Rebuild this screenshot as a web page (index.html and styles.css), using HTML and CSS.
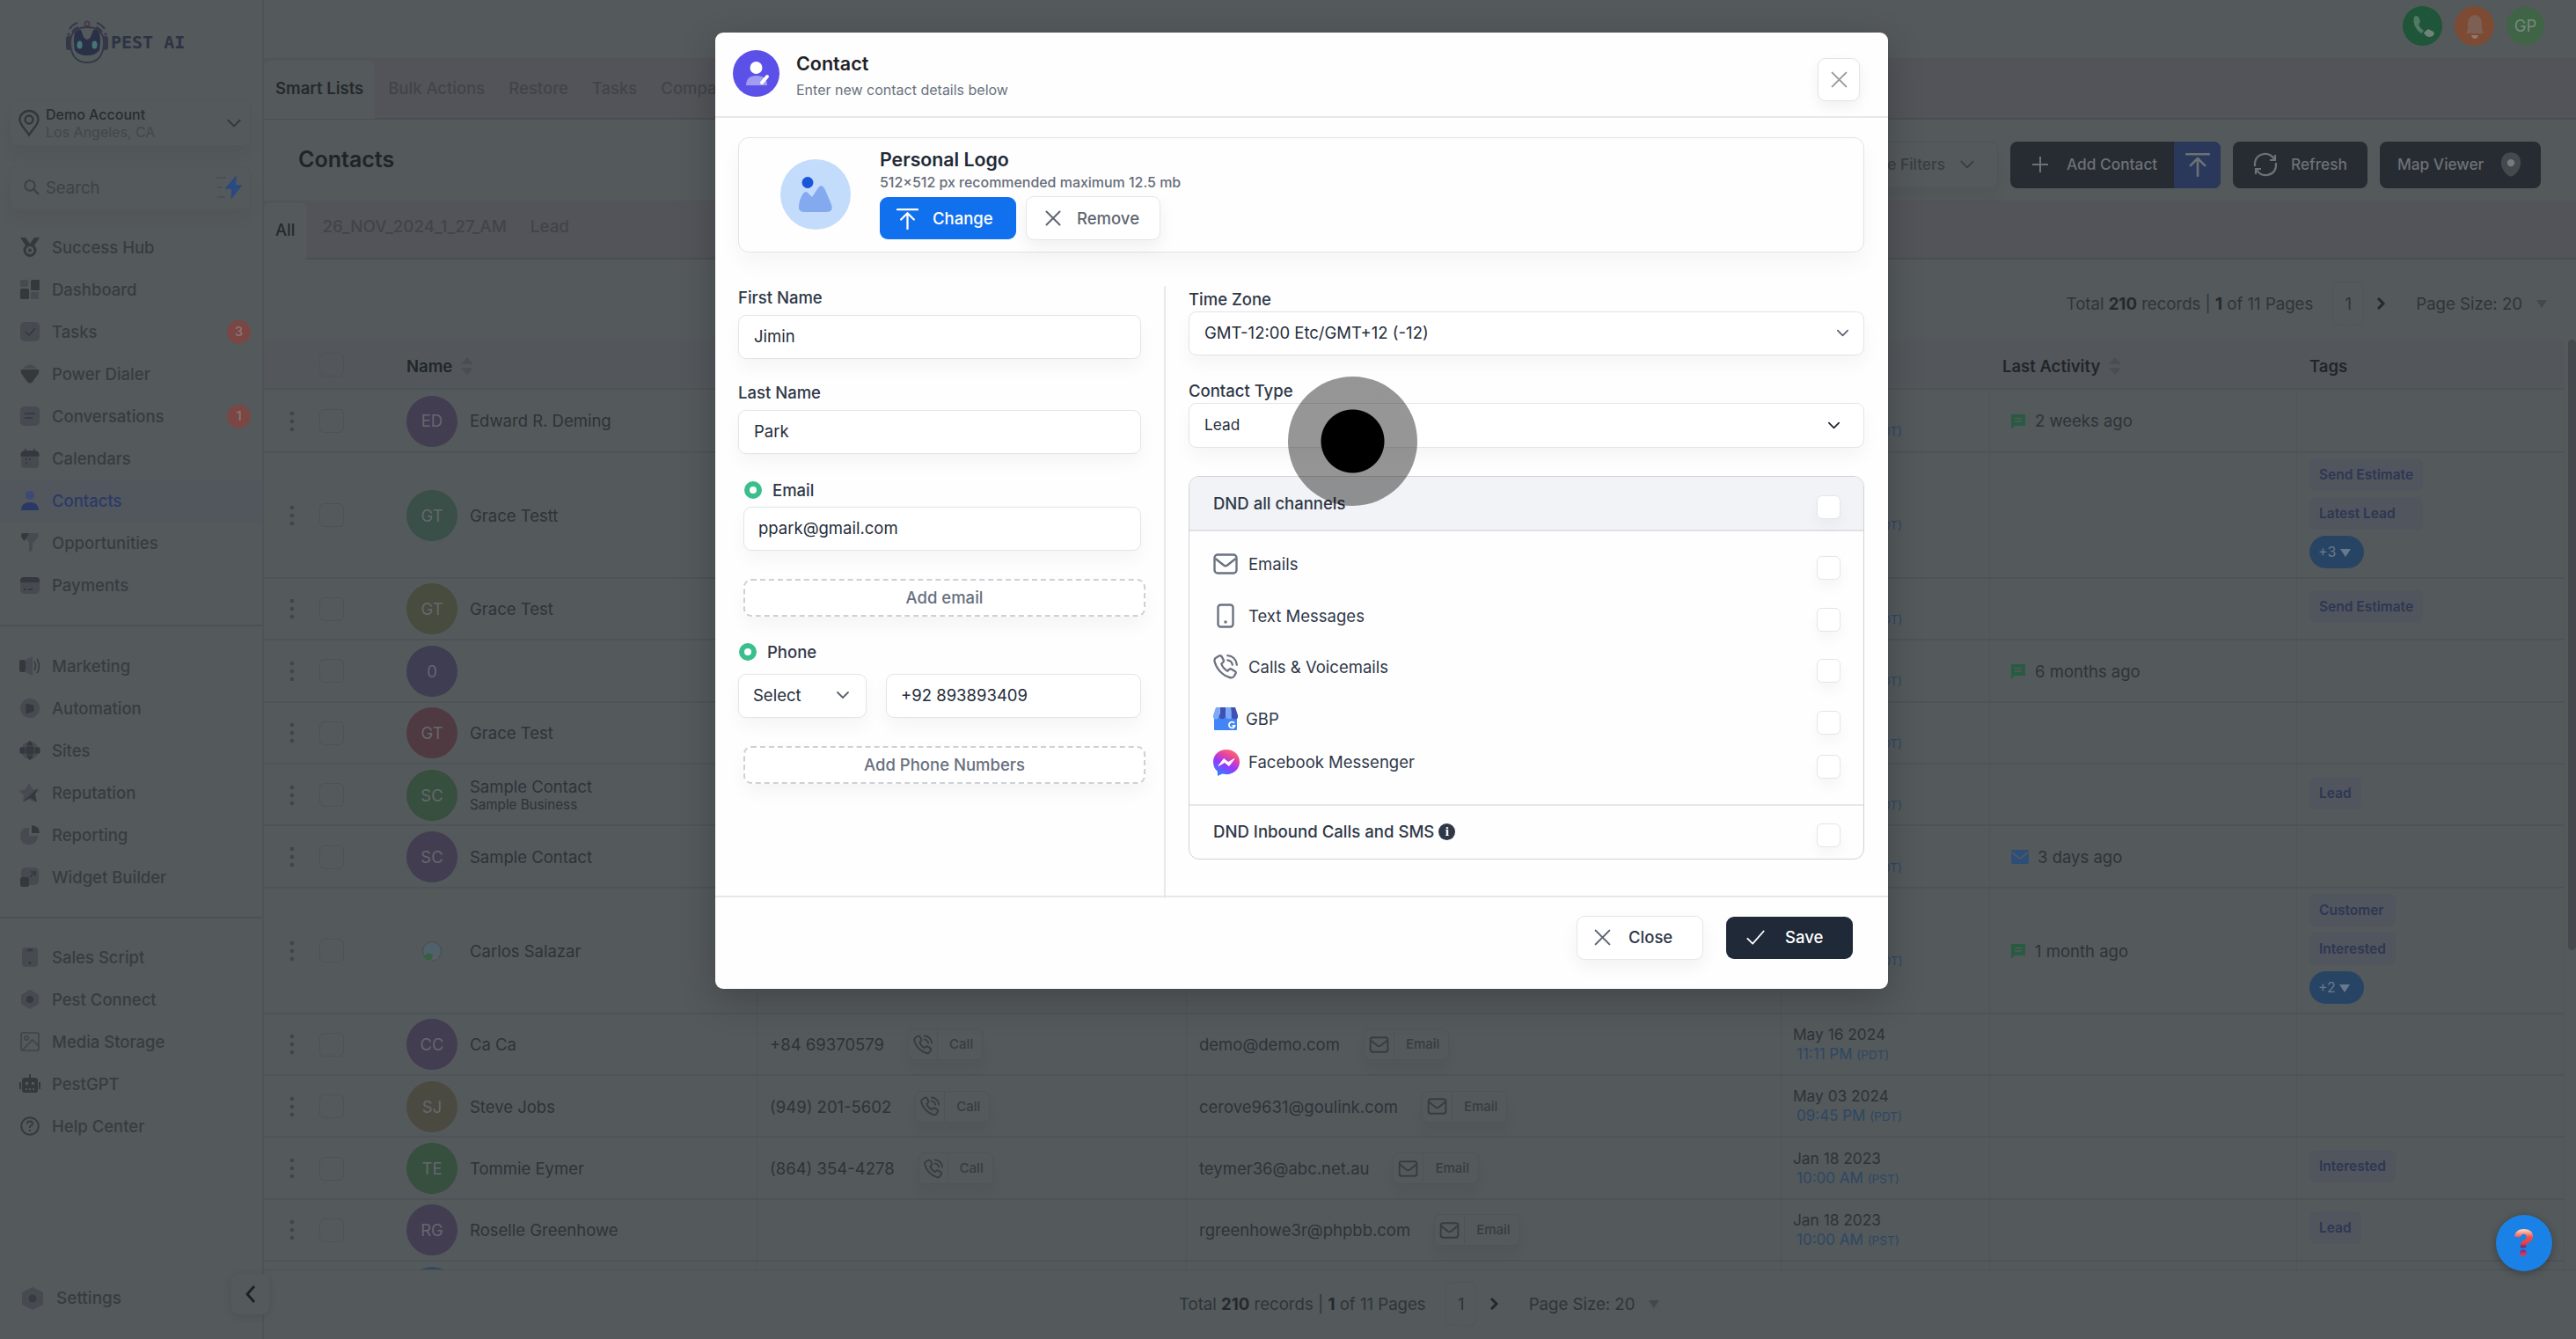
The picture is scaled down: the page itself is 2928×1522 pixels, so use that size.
FILE: index.html
```html
<!DOCTYPE html>
<html lang="en">
<head>
<meta charset="utf-8">
<title>Contacts</title>
<link rel="stylesheet" href="styles.css">
</head>
<body>

<!-- Icon set -->
<svg class="icon-defs" width="0" height="0">
  <defs>
    <linearGradient id="fb-grad" x1="0.2" y1="1" x2="0.7" y2="0">
      <stop offset="0" stop-color="#1f8bff"/>
      <stop offset="0.45" stop-color="#9a36ff"/>
      <stop offset="0.75" stop-color="#e8449f"/>
      <stop offset="1" stop-color="#ff6a6a"/>
    </linearGradient>
  </defs>
  <symbol id="i-down" viewBox="0 0 24 24"><path d="M4 8l8 8 8-8" fill="none" stroke="currentColor" stroke-width="2.4" stroke-linecap="round" stroke-linejoin="round"/></symbol>
  <symbol id="i-right" viewBox="0 0 24 24"><path d="M8 4l8 8-8 8" fill="none" stroke="currentColor" stroke-width="4"/></symbol>
  <symbol id="i-x" viewBox="0 0 24 24"><path d="M3 3l18 18M21 3L3 21" fill="none" stroke="currentColor" stroke-width="2.4" stroke-linecap="round"/></symbol>
  <symbol id="i-check" viewBox="0 0 24 24"><path d="M1 13l7 7L23 3" fill="none" stroke="currentColor" stroke-width="2.2" stroke-linecap="round" stroke-linejoin="round"/></symbol>
  <symbol id="i-upload" viewBox="0 0 24 24"><path d="M1 2h22M12 23V7M5 13l7-7 7 7" fill="none" stroke="currentColor" stroke-width="2.2" stroke-linecap="round" stroke-linejoin="round"/></symbol>
  <symbol id="i-mail" viewBox="0 0 28 24"><rect x="1.5" y="1.5" width="25" height="21" rx="3.5" fill="none" stroke="currentColor" stroke-width="2.4"/><path d="M2.5 6l9.5 7.500q2 1.500 4 0L25.500 6" fill="none" stroke="currentColor" stroke-width="2.4"/></symbol>
  <symbol id="i-mobile" viewBox="0 0 20 28"><rect x="1.500" y="1.500" width="17" height="25" rx="3" fill="none" stroke="currentColor" stroke-width="2.4"/><circle cx="10" cy="21" r="1.700" fill="currentColor"/></symbol>
  <symbol id="i-call" viewBox="0 0 24 24"><path d="M3.200 2.800l2.600-1.500c.9-.5 2-.2 2.500.7l1.700 3.200c.4.8.2 1.700-.4 2.300L8 9c.8 2.700 3.200 5.500 6 7l1.600-1.500c.7-.6 1.600-.7 2.400-.2l3.200 1.900c.8.500 1.100 1.600.6 2.400l-1.400 2.400c-.8 1.300-2.300 1.900-3.800 1.500C9 20.500 3 14 1.300 6.500c-.3-1.500.5-3 1.900-3.700zM14 5.500c2.500.3 4.300 2 4.700 4.500M14 1c5 .4 8.500 4 9 9" fill="none" stroke="currentColor" stroke-width="2" stroke-linecap="round"/></symbol>
  <symbol id="i-chat" viewBox="0 0 16 18"><path d="M0 1h16v13H4l-4 4z" fill="currentColor"/><path d="M4 5.500h8M4 9h8" stroke="#54595c" stroke-width="1.300"/></symbol>
  <symbol id="i-letter" viewBox="0 0 20 16"><rect width="20" height="16" rx="2" fill="currentColor"/><path d="M1 3l9 7 9-7" fill="none" stroke="#54595c" stroke-width="1.600"/></symbol>
  <symbol id="i-sort" viewBox="0 0 14 20"><path d="M0 8l7-8 7 8zM0 12l7 8 7-8z" fill="currentColor"/></symbol>
  <symbol id="i-tri" viewBox="0 0 12 9"><path d="M0 0h12L6 9z" fill="currentColor"/></symbol>
  <symbol id="i-dots" viewBox="0 0 6 24"><circle cx="3" cy="3" r="2.300" fill="currentColor"/><circle cx="3" cy="12" r="2.300" fill="currentColor"/><circle cx="3" cy="21" r="2.300" fill="currentColor"/></symbol>
</svg>

<div class="app">

  <aside class="sidebar">
    <div class="brand">
      <svg width="50" height="50" viewBox="0 0 50 50">
        <path d="M5 10Q8 5 14 3M8 13q3-4 7-5M45 10Q42 5 36 3M42 13q-3-4-7-5" fill="none" stroke="#333848" stroke-width="2"/>
        <circle cx="25" cy="4" r="2.600" fill="none" stroke="#443a48" stroke-width="1.800"/>
        <circle cx="4" cy="16" r="1.800" fill="#443a48"/>
        <circle cx="46" cy="16" r="1.800" fill="#443a48"/>
        <rect x="1" y="18" width="6" height="16" rx="3" fill="#333848"/>
        <rect x="43" y="18" width="6" height="16" rx="3" fill="#333848"/>
        <path d="M6 26Q6 8 25 8t19 18q-1 22-19 22T6 26z" fill="#54595c" stroke="#333848" stroke-width="1.800"/>
        <path d="M11 14q4-4 7-3l3 8q4 6 8 0l3-8q4-1 7 3 2 8 0 20-4 6-14 6t-14-6q-2-12 0-20z" fill="#2a3147"/>
        <ellipse cx="16.500" cy="28" rx="3" ry="4.500" fill="#45757a"/>
        <ellipse cx="33.500" cy="28" rx="3" ry="4.500" fill="#45757a"/>
      </svg>
      <span class="brand-name">PEST AI</span>
    </div>

    <div class="account">
      <svg width="24" height="30" viewBox="0 0 24 30"><path d="M12 28.500C8 22 1.500 17 1.500 11a10.500 10 0 0 1 21 0c0 6-6.500 11-10.500 17.500z" fill="none" stroke="currentColor" stroke-width="2.300"/><circle cx="12" cy="11" r="4.500" fill="none" stroke="currentColor" stroke-width="2.300"/></svg>
      <div class="account-text"><b>Demo Account</b><span>Los Angeles, CA</span></div>
      <svg class="chev" width="20" height="20"><use href="#i-down"/></svg>
    </div>
    <div class="search">
      <svg width="18" height="18" viewBox="0 0 18 18"><circle cx="7" cy="7" r="5.700" fill="none" stroke="currentColor" stroke-width="2"/><path d="M11 11l6 6" stroke="currentColor" stroke-width="2.400"/></svg>
      <span>Search</span>
      <svg class="bolt" width="30" height="28" viewBox="0 0 30 28"><path d="M1 3h11M2 14h5M2 25h9" stroke="#454c5a" stroke-width="1.600"/><path d="M23 2L12 15h7l-1 11 11-14h-7z" fill="#2a4a80" stroke="#2a4a80" stroke-width="1.500" stroke-linejoin="round"/></svg>
    </div>

    <nav class="menu">
      <a><svg class="mi" viewBox="0 0 22 22"><path d="M0 0h6l5 7 5-7h6l-6 9H6z" fill="currentColor"/><circle cx="11" cy="14.500" r="6" fill="none" stroke="currentColor" stroke-width="3"/><circle cx="11" cy="14.500" r="2" fill="currentColor"/></svg>Success Hub</a>
      <a><svg class="mi" viewBox="0 0 22 22"><rect width="9" height="8" rx="1.500" class="pale"/><rect x="12" width="10" height="12" rx="1.500" fill="currentColor"/><rect y="10" width="10" height="12" rx="1.500" fill="currentColor"/><rect x="12" y="14" width="9" height="8" rx="1.500" class="pale"/></svg>Dashboard</a>
      <a><svg class="mi" viewBox="0 0 22 22"><rect width="22" height="22" rx="5" class="pale"/><path d="M6 11l4 4 7-8" fill="none" stroke="currentColor" stroke-width="1.500"/></svg>Tasks<em class="badge">3</em></a>
      <a><svg class="mi" viewBox="0 0 22 22"><path d="M3 5Q11-4 19 5z" class="pale"/><path d="M1 6h20q1 4-2 7l-5 7q-3 3-6 0l-5-7Q0 10 1 6z" fill="currentColor"/></svg>Power Dialer</a>
      <a><svg class="mi" viewBox="0 0 22 22"><rect width="22" height="22" rx="5" class="pale"/><path d="M5 8h12M5 13h9" stroke="currentColor" stroke-width="1.600"/></svg>Conversations<em class="badge">1</em></a>
      <a><svg class="mi" viewBox="0 0 22 22"><rect x="1" y="8" width="20" height="14" rx="4" class="pale"/><path d="M1 8q0-5 5-5h10q5 0 5 5zM6 0v4M16 0v4" fill="currentColor" stroke="currentColor" stroke-width="1.500"/><path d="M6 12h2m2 0h2M6 17h2" stroke="currentColor" stroke-width="2"/></svg>Calendars</a>
      <a class="active"><svg class="mi" viewBox="0 0 22 22"><circle cx="11" cy="5" r="5" fill="#3d4a71"/><path d="M1 22q0-9 10-9t10 9z" fill="currentColor"/></svg>Contacts</a>
      <a><svg class="mi" viewBox="0 0 22 22"><path d="M10 0h10q2 3-1 6l-5 6v7l-4 3V10L6 5z" class="pale"/><path d="M2 0h8L5 9Q-1 4 2 0z" fill="currentColor"/></svg>Opportunities</a>
      <a><svg class="mi" viewBox="0 0 22 22"><rect y="2" width="22" height="19" rx="5" class="pale"/><path d="M0 8V6q0-4 4-4h14q4 0 4 4v2z" fill="currentColor"/><path d="M4 16h3m2 0h5" stroke="currentColor" stroke-width="1.800"/></svg>Payments</a>
    </nav>
    <nav class="menu menu-2">
      <a><svg class="mi" viewBox="0 0 22 22"><path d="M6 4l8-4v22l-8-4z" class="pale"/><rect x="-1" y="4" width="7" height="14" rx="2" fill="currentColor"/><path d="M16 6q3 5 0 10M19 3q5 8 0 16" fill="none" stroke="currentColor" stroke-width="1.500"/></svg>Marketing</a>
      <a><svg class="mi" viewBox="0 0 22 22"><circle cx="11" cy="11" r="11" class="pale"/><path d="M7 6l8 2v6l-8 3z" fill="currentColor" stroke="currentColor" stroke-width="1"/></svg>Automation</a>
      <a><svg class="mi" viewBox="0 0 22 22"><circle cx="11" cy="11" r="10" class="pale"/><path d="M7 7h8v8H7zM0 8h5v6H0zM17 8h5v6h-5zM8 5q3-9 6 0zM8 17q3 9 6 0z" fill="currentColor" stroke="currentColor"/></svg>Sites</a>
      <a><svg class="mi" viewBox="0 0 22 22"><path d="M10 0l4 7 8 1-7 6 1 8-6-4-7 4 1-8-5-5 7-2z" class="pale"/><path d="M3 21L20 6l-3 7 2 9-7-5z" fill="currentColor"/></svg>Reputation</a>
      <a><svg class="mi" viewBox="0 0 22 22"><path d="M10 3v9h10q-1 10-10 10Q0 22 0 12T10 3z" class="pale"/><path d="M13 0q9 1 9 9h-9z" fill="currentColor"/></svg>Reporting</a>
      <a><svg class="mi" viewBox="0 0 22 22"><rect x="1" width="20" height="20" rx="5" class="pale"/><rect y="11" width="10" height="11" rx="2.500" fill="currentColor"/><path d="M11 11l6-6m-5 0h5v5" fill="none" stroke="currentColor" stroke-width="1.600"/></svg>Widget Builder</a>
    </nav>
    <nav class="menu menu-3">
      <a><svg class="mi" viewBox="0 0 22 22"><rect x="2" width="18" height="22" rx="4" class="pale"/><path d="M8 3h6M11 16v3" stroke="currentColor" stroke-width="2.500"/></svg>Sales Script</a>
      <a><svg class="mi" viewBox="0 0 22 22"><path d="M11 0l10 6v10l-10 6-10-6V6z" class="pale"/><circle cx="11" cy="11" r="4" fill="currentColor"/></svg>Pest Connect</a>
      <a><svg class="mi" viewBox="0 0 22 22"><rect x="1" y="1" width="20" height="20" rx="2" fill="none" stroke="#3f4449" stroke-width="1.700"/><circle cx="7" cy="7" r="2.200" fill="none" stroke="#3f4449" stroke-width="1.500"/><path d="M3 20L14 9l7 7" fill="none" stroke="#3f4449" stroke-width="1.700"/></svg>Media Storage</a>
      <a><svg class="mi" viewBox="0 0 22 22"><path d="M10 0h2v4h5q3 0 3 3v11q0 3-3 3H5q-3 0-3-3V7q0-3 3-3h5zM-1 9h2v8h-2zM21 9h2v8h-2z" fill="currentColor"/><path d="M6 9h3v3H6zM13 9h3v3h-3zM6 16h2v2H6zM10 16h2v2h-2zM14 16h2v2h-2z" fill="#54595c"/></svg>PestGPT</a>
      <a><svg class="mi" viewBox="0 0 22 22"><circle cx="11" cy="11" r="9.800" fill="none" stroke="currentColor" stroke-width="1.900"/><path d="M8 8.500q0-3 3-3t3 2.700q0 1.700-3 3.300v1.500M11 15v2" fill="none" stroke="currentColor" stroke-width="1.900"/></svg>Help Center</a>
    </nav>

    <div class="settings"><svg width="26" height="26" viewBox="0 0 26 26"><path d="M13 0l12 6v14l-12 6-12-6V6z" class="pale"/><circle cx="13" cy="13" r="4.500" fill="currentColor"/></svg>Settings</div>
    <div class="collapse"><svg width="24" height="24" viewBox="0 0 24 24"><path d="M16 3l-8 9 8 9" fill="none" stroke="currentColor" stroke-width="2.800"/></svg></div>
  </aside>

  <main class="main">
    <header class="topbar">
      <span class="round call"><svg width="28" height="28" viewBox="0 0 28 28"><path d="M4 3q4-3 6 2l1 4-2 3q2 4 6 7l-3 3Q1 14 4 3z" fill="#4f7a64"/><path d="M15 21l5-4 6 3q2 3-1 5-7 3-10-4z" fill="#72827a"/></svg></span>
      <span class="round bell"><svg width="24" height="28" viewBox="0 0 24 28"><path d="M12 1q8 1 8 10v6l2 5H2l2-5v-6Q4 2 12 1z" fill="#7e5f54"/><path d="M8 24h8q-1 4-4 4t-4-4z" fill="#8a7a74"/></svg></span>
      <span class="round gp">GP</span>
    </header>

    <nav class="tabs">
      <a class="on">Smart Lists</a><a>Bulk Actions</a><a>Restore</a><a>Tasks</a><a>Companies</a>
    </nav>

    <section class="title-row">
      <h1>Contacts</h1>
      <div class="actions">
        <span class="btn filters">More Filters <svg width="20" height="20"><use href="#i-down"/></svg></span>
        <span class="btn add"><span class="plus"><svg width="20" height="20" viewBox="0 0 20 20"><path d="M10 1v18M1 10h18" stroke="currentColor" stroke-width="2"/></svg>Add Contact</span><span class="up"><svg width="28" height="28"><use href="#i-upload"/></svg></span></span>
        <span class="btn refresh"><svg width="28" height="28" viewBox="0 0 28 28"><path d="M2 16Q1 4 12 2q8-1 12 6M26 12q1 12-10 14-8 1-12-6M25 3v6h-6M3 25v-6h6" fill="none" stroke="currentColor" stroke-width="2.200"/></svg>Refresh</span>
        <span class="btn map">Map Viewer<svg width="24" height="28" viewBox="0 0 26 30"><path d="M13 0q12 1 12 13 0 8-8 15-4 3-8 0-8-7-8-15Q1 1 13 0z" fill="#44494e"/><circle cx="13" cy="13" r="4.500" fill="#777b7e"/></svg></span>
      </div>
    </section>

    <nav class="tabs list-tabs">
      <a class="on">All</a><a>26_NOV_2024_1_27_AM</a><a>Lead</a>
    </nav>

    <div class="pager top">
      <span class="total">Total <b>210</b> records | <b>1</b> of 11 Pages</span>
      <span class="page">1</span>
      <svg class="next" width="18" height="18"><use href="#i-right"/></svg>
      <span class="size">Page Size: 20</span>
      <svg class="tri" width="12" height="9"><use href="#i-tri"/></svg>
    </div>

    <section class="table">
      <div class="row head">
        <div class="cell name"><i class="gap"></i><i class="cb"></i><b>Name</b><svg class="sort" width="14" height="20"><use href="#i-sort"/></svg></div>
        <div class="cell"></div><div class="cell"></div><div class="cell"></div>
        <div class="cell"><b>Last Activity</b><svg class="sort" width="14" height="20"><use href="#i-sort"/></svg></div>
        <div class="cell"><b>Tags</b></div>
      </div>

      <div class="row first">
        <div class="cell name"><svg class="dots"><use href="#i-dots"/></svg><i class="cb"></i><span class="av purple">ED</span>Edward R. Deming</div>
        <div class="cell"></div><div class="cell"></div>
        <div class="cell when"><span>Dec 12 2024</span><span class="time">09:45 PM <small>(PDT)</small></span></div>
        <div class="cell act"><svg class="chat"><use href="#i-chat"/></svg>2 weeks ago</div>
        <div class="cell"></div>
      </div>
      <div class="row tall">
        <div class="cell name"><svg class="dots"><use href="#i-dots"/></svg><i class="cb"></i><span class="av teal">GT</span>Grace Testt</div>
        <div class="cell"></div><div class="cell"></div>
        <div class="cell when"><span>Jun 20 2024</span><span class="time">09:45 PM <small>(PDT)</small></span></div>
        <div class="cell"></div>
        <div class="cell"><div class="tags"><span>Send Estimate</span><span>Latest Lead</span><em>+3 <svg width="12" height="9"><use href="#i-tri"/></svg></em></div></div>
      </div>
      <div class="row">
        <div class="cell name"><svg class="dots"><use href="#i-dots"/></svg><i class="cb"></i><span class="av olive">GT</span>Grace Test</div>
        <div class="cell"></div><div class="cell"></div>
        <div class="cell when"><span>Jun 20 2024</span><span class="time">09:40 PM <small>(PDT)</small></span></div>
        <div class="cell"></div>
        <div class="cell"><div class="tags"><span>Send Estimate</span></div></div>
      </div>
      <div class="row">
        <div class="cell name"><svg class="dots"><use href="#i-dots"/></svg><i class="cb"></i><span class="av violet">0</span></div>
        <div class="cell"></div><div class="cell"></div>
        <div class="cell when"><span>Jun 12 2024</span><span class="time">09:45 PM <small>(PDT)</small></span></div>
        <div class="cell act"><svg class="chat"><use href="#i-chat"/></svg>6 months ago</div>
        <div class="cell"></div>
      </div>
      <div class="row">
        <div class="cell name"><svg class="dots"><use href="#i-dots"/></svg><i class="cb"></i><span class="av red">GT</span>Grace Test</div>
        <div class="cell"></div><div class="cell"></div>
        <div class="cell when"><span>Jun 12 2024</span><span class="time">09:45 PM <small>(PDT)</small></span></div>
        <div class="cell"></div><div class="cell"></div>
      </div>
      <div class="row">
        <div class="cell name"><svg class="dots"><use href="#i-dots"/></svg><i class="cb"></i><span class="av green">SC</span><span class="two">Sample Contact<small>Sample Business</small></span></div>
        <div class="cell"></div><div class="cell"></div>
        <div class="cell when"><span>Jun 11 2024</span><span class="time">09:45 PM <small>(PDT)</small></span></div>
        <div class="cell"></div>
        <div class="cell"><div class="tags"><span>Lead</span></div></div>
      </div>
      <div class="row">
        <div class="cell name"><svg class="dots"><use href="#i-dots"/></svg><i class="cb"></i><span class="av purple">SC</span>Sample Contact</div>
        <div class="cell"></div><div class="cell"></div>
        <div class="cell when"><span>Jun 11 2024</span><span class="time">09:45 PM <small>(PDT)</small></span></div>
        <div class="cell act"><svg class="letter"><use href="#i-letter"/></svg>3 days ago</div>
        <div class="cell"></div>
      </div>
      <div class="row tall">
        <div class="cell name"><svg class="dots"><use href="#i-dots"/></svg><i class="cb"></i><span class="av broken"><svg width="24" height="24" viewBox="0 0 24 24"><circle cx="12" cy="12" r="10.500" fill="#50616b" stroke="#464b50"/><path d="M3 18q4-6 10-2l-2 7q-6-1-8-5z" fill="#36603f"/><path d="M10 23l12-11-4 9z" fill="#5b6063"/></svg></span>Carlos Salazar</div>
        <div class="cell"></div><div class="cell"></div>
        <div class="cell when"><span>&nbsp;</span><span class="time">09:44 PM <small>(PDT)</small></span></div>
        <div class="cell act"><svg class="chat"><use href="#i-chat"/></svg>1 month ago</div>
        <div class="cell"><div class="tags"><span>Customer</span><span>Interested</span><em>+2 <svg width="12" height="9"><use href="#i-tri"/></svg></em></div></div>
      </div>
      <div class="row">
        <div class="cell name"><svg class="dots"><use href="#i-dots"/></svg><i class="cb"></i><span class="av purple">CC</span>Ca Ca</div>
        <div class="cell">+84 69370579<span class="mini"><svg width="22" height="23"><use href="#i-call"/></svg><b>Call</b></span></div>
        <div class="cell">demo@demo.com<span class="mini"><svg width="23" height="19"><use href="#i-mail"/></svg><b>Email</b></span></div>
        <div class="cell when"><span>May 16 2024</span><span class="time">11:11 PM <small>(PDT)</small></span></div>
        <div class="cell"></div><div class="cell"></div>
      </div>
      <div class="row">
        <div class="cell name"><svg class="dots"><use href="#i-dots"/></svg><i class="cb"></i><span class="av sand">SJ</span>Steve Jobs</div>
        <div class="cell">(949) 201-5602<span class="mini"><svg width="22" height="23"><use href="#i-call"/></svg><b>Call</b></span></div>
        <div class="cell">cerove9631@goulink.com<span class="mini"><svg width="23" height="19"><use href="#i-mail"/></svg><b>Email</b></span></div>
        <div class="cell when"><span>May 03 2024</span><span class="time">09:45 PM <small>(PDT)</small></span></div>
        <div class="cell"></div><div class="cell"></div>
      </div>
      <div class="row">
        <div class="cell name"><svg class="dots"><use href="#i-dots"/></svg><i class="cb"></i><span class="av green">TE</span>Tommie Eymer</div>
        <div class="cell">(864) 354-4278<span class="mini"><svg width="22" height="23"><use href="#i-call"/></svg><b>Call</b></span></div>
        <div class="cell">teymer36@abc.net.au<span class="mini"><svg width="23" height="19"><use href="#i-mail"/></svg><b>Email</b></span></div>
        <div class="cell when"><span>Jan 18 2023</span><span class="time">10:00 AM <small>(PST)</small></span></div>
        <div class="cell"></div>
        <div class="cell"><div class="tags"><span>Interested</span></div></div>
      </div>
      <div class="row">
        <div class="cell name"><svg class="dots"><use href="#i-dots"/></svg><i class="cb"></i><span class="av purple">RG</span>Roselle Greenhowe</div>
        <div class="cell"></div>
        <div class="cell">rgreenhowe3r@phpbb.com<span class="mini"><svg width="23" height="19"><use href="#i-mail"/></svg><b>Email</b></span></div>
        <div class="cell when"><span>Jan 18 2023</span><span class="time">10:00 AM <small>(PST)</small></span></div>
        <div class="cell"></div>
        <div class="cell"><div class="tags"><span>Lead</span></div></div>
      </div>
      <div class="row">
        <div class="cell name"><i class="gap"></i><i class="gap cbgap"></i><span class="av blue"></span></div>
        <div class="cell"></div><div class="cell"></div><div class="cell"></div><div class="cell"></div><div class="cell"></div>
      </div>
      <i class="scrollbar"></i>
    </section>

    <div class="pager bottom">
      <span class="total">Total <b>210</b> records | <b>1</b> of 11 Pages</span>
      <span class="page">1</span>
      <svg class="next" width="18" height="18"><use href="#i-right"/></svg>
      <span class="size">Page Size: 20</span>
      <svg class="tri" width="12" height="9"><use href="#i-tri"/></svg>
    </div>
  </main>
</div>

<div class="modal">
  <header class="modal-head">
    <span class="modal-icon"><svg width="28" height="30" viewBox="0 0 28 30"><circle cx="13.500" cy="8" r="7" fill="#fff"/><path d="M2 28q0-11 12-11t12 11z" fill="#a29bf2"/><path d="M20 25l6-7" stroke="#fff" stroke-width="4" stroke-linecap="round"/></svg></span>
    <div class="modal-title">
      <h2>Contact</h2>
      <p>Enter new contact details below</p>
    </div>
    <button class="x-btn"><svg width="21" height="21"><use href="#i-x"/></svg></button>
  </header>

  <div class="modal-body">
    <section class="logo-card">
      <span class="logo-img"><svg width="40" height="42" viewBox="0 0 40 42"><circle cx="11" cy="7.500" r="6.500" fill="#1a56db"/><path d="M1 34q1-9 5-14 3-4 6 0l4 4 6-9q5-8 9 1l6 14q5 11-5 11H7q-7 0-6-7z" fill="#83aaee"/></svg></span>
      <div class="logo-text">
        <h3>Personal Logo</h3>
        <p>512×512 px recommended maximum 12.5 mb</p>
        <div class="logo-btns">
          <button class="change"><svg width="25" height="25"><use href="#i-upload"/></svg>Change</button>
          <button class="remove"><svg width="20" height="20"><use href="#i-x"/></svg>Remove</button>
        </div>
      </div>
    </section>

    <div class="form">
      <div class="col-left">
        <label>First Name</label>
        <div class="field">Jimin</div>
        <label class="l-last">Last Name</label>
        <div class="field">Park</div>
        <label class="dot l-email"><i></i>Email</label>
        <div class="field inset">ppark@gmail.com</div>
        <button class="dashed">Add email</button>
        <label class="dot l-phone"><i></i>Phone</label>
        <div class="phone">
          <div class="field select">Select<svg width="18" height="18"><use href="#i-down"/></svg></div>
          <div class="field">+92 893893409</div>
        </div>
        <button class="dashed">Add Phone Numbers</button>
      </div>

      <div class="col-right">
        <label>Time Zone</label>
        <div class="field wide">GMT-12:00 Etc/GMT+12 (-12)<svg width="17" height="17"><use href="#i-down"/></svg></div>
        <label class="l-type">Contact Type</label>
        <div class="field wide lead">Lead<svg width="17" height="17"><use href="#i-down"/></svg></div>

        <div class="dnd">
          <div class="dnd-row dnd-head">DND all channels<i class="box"></i></div>
          <div class="dnd-list">
            <div class="dnd-row"><svg width="28" height="24"><use href="#i-mail"/></svg>Emails<i class="box"></i></div>
            <div class="dnd-row"><svg width="28" height="28"><use href="#i-mobile"/></svg>Text Messages<i class="box"></i></div>
            <div class="dnd-row"><svg width="28" height="28"><use href="#i-call"/></svg>Calls &amp; Voicemails<i class="box"></i></div>
            <div class="dnd-row gbp"><svg width="28" height="26" viewBox="0 0 28 26"><rect x="1" y="8" width="26" height="18" rx="1" fill="#4285f4"/><path d="M3 0h5L6 12q-3 3-6 0V9z" fill="#7baaf7"/><path d="M8 0h6v11q-3 4-7 1z" fill="#3f51b5"/><path d="M14 0h6l1 12q-4 3-7-1z" fill="#7baaf7"/><path d="M20 0h5l3 9v3q-3 3-7 0z" fill="#3f51b5"/><path d="M24 18a3.400 3.400 0 1 0 .6 2.800h-3" fill="none" stroke="#fff" stroke-width="1.700"/></svg>GBP<i class="box"></i></div>
            <div class="dnd-row fb"><svg width="30" height="30" viewBox="0 0 30 30"><path d="M15 0c8.500 0 15 6 15 14s-6.500 14.200-15 14.200c-1.700 0-3 0-4.500-.6L5 30l-.2-5.200C1.800 22.300 0 18.500 0 14 0 6 6.500 0 15 0z" fill="url(#fb-grad)"/><path d="M6 18.500l6-8 5 4 7-4-6 8-5-4z" fill="#fff" stroke="#fff" stroke-linejoin="round"/></svg>Facebook Messenger<i class="box"></i></div>
          </div>
          <div class="dnd-row dnd-foot">DND Inbound Calls and SMS<span class="info">i</span><i class="box"></i></div>
        </div>
      </div>
    </div>
  </div>

  <footer class="modal-foot">
    <button class="close"><svg width="21" height="21"><use href="#i-x"/></svg>Close</button>
    <button class="save"><svg width="23" height="20"><use href="#i-check"/></svg>Save</button>
  </footer>
</div>

<div class="pointer"></div>
<div class="help"><span>?</span></div>

</body>
</html>
```

FILE: styles.css
```css
* {
  box-sizing: border-box;
}

body {
  margin: 0;
  width: 2928px;
  height: 1522px;
  overflow: hidden;
  font-family: Inter, "Liberation Sans", sans-serif;
  font-size: 18.5px;
  line-height: 1.2;
  color: #2e3338;
  background: #54595c;
}

h1, h2, h3, p {
  margin: 0;
}

i, em {
  font-style: normal;
}

button {
  font: inherit;
  padding: 0;
  background: #fff;
}

svg {
  flex: none;
  overflow: visible;
}

.icon-defs {
  position: absolute;
}

.app {
  display: flex;
  height: 1522px;
}

/* Sidebar */
.sidebar {
  width: 300px;
  border-right: 2px solid #4e5357;
  display: flex;
  flex-direction: column;
  position: relative;
}

.brand {
  display: flex;
  align-items: center;
  gap: 2px;
  height: 50px;
  margin: 23px 0 0 74px;
  color: #2d3344;
}

.brand-name {
  font-family: "DejaVu Sans Mono", monospace;
  font-weight: bold;
  font-size: 20px;
}

.account,
.search {
  margin: 40px 13px 0 11px;
  height: 53px;
  border-radius: 8px;
  border: 1px solid #515659;
  display: flex;
  align-items: center;
  box-shadow: 0 12px 16px rgba(0, 0, 0, 0.03);
  padding-left: 9px;
  color: #32373b;
}

.search {
  margin-top: 23px;
  height: 49px;
  padding-left: 15px;
  padding-bottom: 1px;
  color: #3c4145;
}

.search span {
  margin-left: 7px;
}

.search .bolt {
  margin-left: auto;
  margin-right: 9px;
}

.account-text {
  margin-left: 7px;
  font-size: 16px;
  line-height: 20px;
}

.account-text b {
  display: block;
  font-weight: 500;
  color: #282d31;
}

.account-text span {
  color: #42474b;
}

.account .chev {
  margin-left: auto;
  margin-right: 8px;
}

.menu {
  display: flex;
  flex-direction: column;
  margin-top: 19px;
  font-weight: 500;
  color: #373c40;
}

.menu-2 {
  margin-top: 21px;
  padding-top: 21px;
  border-top: 2px solid #4b5054;
}

.menu-3 {
  margin-top: 21px;
  padding-top: 20px;
  border-top: 2px solid #4b5054;
}

.menu a {
  height: 48px;
  display: flex;
  align-items: center;
  padding: 0 13px 0 23px;
}

.menu .active {
  color: #2c3a66;
  background: #51575d;
}

.mi {
  width: 22px;
  height: 22px;
  margin-right: 14px;
  color: #35393e;
}

.active .mi {
  color: #2a3866;
}

.pale {
  fill: #474a50;
}

.badge {
  margin-left: auto;
  width: 27px;
  height: 27px;
  border-radius: 50%;
  background: #7a4745;
  color: #8a7574;
  font-size: 15px;
  display: flex;
  align-items: center;
  justify-content: center;
}

.settings {
  position: absolute;
  left: 24px;
  top: 1463px;
  display: flex;
  align-items: center;
  gap: 14px;
  font-size: 19px;
  font-weight: 500;
  color: #373c40;
}

.collapse {
  position: absolute;
  left: 263px;
  top: 1448px;
  width: 43px;
  height: 46px;
  border-radius: 8px;
  background: #54595c;
  box-shadow: 0 2px 8px rgba(0, 0, 0, 0.1);
  display: flex;
  align-items: center;
  justify-content: center;
  color: #1b2024;
}

/* Main area */
.main {
  width: 2628px;
  display: flex;
  flex-direction: column;
}

.topbar {
  height: 66px;
  display: flex;
  justify-content: flex-end;
  gap: 14px;
  padding: 7px 36px 0 0;
}

.round {
  width: 45px;
  height: 45px;
  border-radius: 50%;
  display: flex;
  align-items: center;
  justify-content: center;
}

.call {
  background: #1f5539;
}

.bell {
  background: #7d4a34;
}

.gp {
  width: 43px;
  height: 43px;
  margin-top: 1px;
  background: #3f6546;
  color: #788a7e;
}

.tabs {
  height: 70px;
  background: #525459;
  border-top: 1px solid #4f5357;
  border-bottom: 2px solid #4a4e52;
  display: flex;
  align-items: center;
  color: #404448;
  font-weight: 500;
}

.tabs a {
  margin-left: 27px;
}

.tabs .on {
  margin: 2px 0 0;
  height: 66px;
  line-height: 62px;
  padding: 0 13px;
  background: #54595c;
  border-radius: 8px 8px 0 0;
  color: #25292d;
  font-weight: 600;
}

.tabs .on + a {
  margin-left: 15px;
}

.title-row {
  height: 92px;
  display: flex;
  justify-content: space-between;
  align-items: center;
  padding: 0 40px 0 39px;
}

h1 {
  font-size: 25px;
  line-height: 30px;
  padding-bottom: 3px;
  font-weight: 600;
  color: #1f2427;
}

.actions {
  display: flex;
  gap: 14px;
  padding-top: 10px;
}

.btn {
  height: 53px;
  border-radius: 8px;
  display: flex;
  align-items: center;
  background: #272c33;
  color: #6d7175;
  font-size: 17.3px;
  font-weight: 500;
  white-space: nowrap;
}

.filters {
  width: 220px;
  justify-content: flex-end;
  gap: 15px;
  padding-right: 24px;
  background: none;
  border: 1px solid #4f5458;
  color: #393e42;
  box-shadow: 0 12px 16px rgba(0, 0, 0, 0.03);
}

.add {
  overflow: hidden;
}

.plus {
  width: 186px;
  padding-left: 24px;
  display: flex;
  align-items: center;
  gap: 20px;
}

.up {
  width: 53px;
  height: 53px;
  background: #2a385c;
  display: flex;
  align-items: center;
  justify-content: center;
}

.refresh {
  width: 153px;
  padding-left: 23px;
  gap: 15px;
}

.map {
  width: 183px;
  padding-left: 20px;
  gap: 19px;
}

.list-tabs {
  height: 67px;
}

.list-tabs .on {
  font-weight: 500;
  height: 65px;
}

.list-tabs a:not(.on) {
  padding-bottom: 6px;
  font-size: 18.8px;
}

.list-tabs .on + a {
  margin-left: 18px;
}

.pager {
  display: flex;
  align-items: center;
  font-size: 18.6px;
  color: #2f3439;
}

.pager b {
  font-weight: 700;
  color: #25292e;
}

.page {
  width: 36px;
  height: 50px;
  margin-left: 22px;
  line-height: 48px;
  text-align: center;
  border: 1px solid #505558;
  border-radius: 8px;
}

.next {
  margin: 0 31px 0 10px;
  color: #24292d;
}

.tri {
  margin-left: 16px;
  color: #43484b;
}

.top {
  height: 91px;
  padding: 9px 33px 0 0;
  justify-content: flex-end;
}

.bottom {
  height: 78px;
  padding: 0 0 2px 1040px;
}

/* Contacts table */
.table {
  position: relative;
  height: 1058px;
  overflow: hidden;
  border-bottom: 1px solid #4c5155;
}

.row {
  display: grid;
  grid-template-columns: 561px 488px 676px 237px 349px 304px;
  width: 2615px;
  height: 70.4px;
  border-bottom: 2px solid #4e5357;
}

.head {
  height: 57px;
  background: #53575b;
}

.head b {
  font-weight: 600;
  color: #212629;
  padding-top: 4px;
}

.first {
  height: 72px;
}

.tall {
  height: 142.8px;
}

.cell {
  display: flex;
  align-items: center;
  padding-left: 14px;
  padding-top: 1px;
  border-right: 1px solid #4f5458;
}

.head .cell {
  border: none;
}

.name {
  padding-left: 29px;
}

.dots {
  width: 6px;
  height: 24px;
  color: #404548;
}

.gap {
  width: 6px;
}

.cb {
  width: 28px;
  height: 27px;
  margin: 0 71px 0 28px;
  border: 1.5px solid #4d5256;
  border-radius: 6px;
}

.cbgap {
  width: 127px;
}

.sort {
  margin: 4px 0 0 10px;
  color: #4a4e52;
}

.av {
  width: 58px;
  height: 58px;
  border-radius: 50%;
  margin-right: 14px;
  flex: none;
  display: flex;
  align-items: center;
  justify-content: center;
  color: #66676f;
}

.purple { background: #423d51; }
.violet { background: #3f3d51; }
.teal { background: #394f48; }
.olive { background: #474c3f; }
.red { background: #4f3a41; }
.green { background: #374f3e; }
.sand { background: #4b4a40; }
.blue { background: #36485a; }

.two small {
  display: block;
  font-size: 15.2px;
}

.when {
  flex-direction: column;
  align-items: flex-start;
  justify-content: center;
  font-size: 17.3px;
  line-height: 23px;
  padding-left: 13px;
}

.time {
  color: #2e4762;
  padding-left: 4px;
  font-size: 17px;
}

.time small {
  font-size: 13.6px;
}

.act {
  padding-left: 24px;
}

.chat {
  width: 16px;
  height: 18px;
  margin-right: 11px;
  color: #285b42;
}

.letter {
  width: 20px;
  height: 16px;
  margin-right: 10px;
  color: #2c4e79;
}

.tags {
  display: flex;
  flex-direction: column;
  gap: 7px;
  margin-top: -5px;
}

.tags span {
  height: 37px;
  line-height: 37px;
  padding: 0 11px;
  border-radius: 8px;
  background: #51555d;
  color: #2e3753;
  font-size: 15.5px;
  font-weight: 600;
}

.tags em {
  width: 62px;
  height: 37px;
  line-height: 37px;
  padding-left: 10px;
  border-radius: 19px;
  background: #284465;
  color: #69798c;
  font-size: 16px;
}

.mini {
  display: flex;
  align-items: center;
  height: 36px;
  margin-left: 27px;
  padding: 0 10px 0 5px;
  border: 1px solid #4f5458;
  border-radius: 7px;
  box-shadow: 0 10px 14px rgba(0, 0, 0, 0.04);
  color: #373c40;
}

.mini b {
  height: 34px;
  line-height: 34px;
  margin-left: 5px;
  padding-left: 13px;
  border-left: 1px solid #4e5357;
  font-size: 15px;
  font-weight: 500;
}

.scrollbar {
  position: absolute;
  right: 0;
  top: 0;
  width: 9px;
  height: 694px;
  border-radius: 5px;
  background: #45494d;
}

/* Contact modal */
.modal {
  position: absolute;
  left: 813px;
  top: 37px;
  width: 1333px;
  height: 1087px;
  border-radius: 9px;
  background: #fefefe;
  box-shadow: 0 12px 40px rgba(0, 0, 0, 0.22);
  color: #2f3848;
  overflow: hidden;
  display: flex;
  flex-direction: column;
}

.modal-head {
  height: 97px;
  border-bottom: 2px solid #e7e8ea;
  display: flex;
  padding-left: 20px;
}

.modal-icon {
  width: 53px;
  height: 53px;
  margin-top: 20px;
  border-radius: 50%;
  background: #5b50e8;
  display: flex;
  align-items: center;
  justify-content: center;
}

.modal-title {
  margin: 22px 0 0 19px;
}

h2 {
  font-size: 21.5px;
  line-height: 26px;
  font-weight: 600;
  color: #1e2126;
}

.modal-title p {
  margin-top: 7px;
  font-size: 16px;
  line-height: 20px;
  color: #6b7280;
}

.x-btn {
  width: 48px;
  height: 49px;
  margin: 29px 32px 0 auto;
  border: 1.5px solid #e2e4e8;
  border-radius: 9px;
  color: #9a9ea6;
  display: flex;
  align-items: center;
  justify-content: center;
  box-shadow: 0 6px 16px rgba(0, 0, 0, 0.06);
}

.modal-body {
  height: 886px;
  padding: 22px 27px 0 26px;
  border-bottom: 2px solid #e7e8ea;
}

.logo-card {
  height: 131px;
  border: 1.5px solid #e1e3e7;
  border-radius: 12px;
  box-shadow: 0 12px 24px rgba(0, 0, 0, 0.04);
  display: flex;
  padding-left: 47px;
}

.logo-img {
  width: 80px;
  height: 80px;
  margin-top: 24px;
  border-radius: 50%;
  background: #c3dcfc;
  display: flex;
  align-items: center;
  justify-content: center;
}

.logo-text {
  margin: 11px 0 0 33px;
}

h3 {
  font-size: 21.3px;
  line-height: 26px;
  font-weight: 600;
  color: #1f2937;
}

.logo-text p {
  margin-top: 4px;
  font-size: 15.95px;
  line-height: 20px;
  font-weight: 500;
  color: #666d7a;
}

.logo-btns {
  display: flex;
  align-items: center;
  gap: 11px;
  margin-top: 5px;
}

.logo-btns button {
  height: 48px;
  border-radius: 9px;
  font-weight: 500;
  display: flex;
  align-items: center;
  border: none;
}

.logo-btns .change {
  width: 155px;
  padding-left: 19px;
  gap: 16px;
  color: #fff;
  background: #1170ee;
}

.logo-btns .remove {
  width: 153px;
  height: 50px;
  padding-left: 20px;
  gap: 17px;
  color: #5f6672;
  border: 1.5px solid #e4e6ea;
  box-shadow: 0 8px 20px rgba(0, 0, 0, 0.06);
}

.form {
  display: flex;
  margin-top: 38px;
  height: 696px;
}

.col-left {
  width: 486px;
  border-right: 2px solid #e8e9eb;
}

.col-right {
  width: 794px;
  padding-left: 26px;
}

.form label {
  display: block;
  height: 24px;
  line-height: 24px;
  margin-top: 0;
  font-weight: 500;
}

.col-left label {
  padding-top: 1px;
}

.field {
  width: 458px;
  height: 50px;
  margin-top: 9px;
  border: 1.5px solid #e2e4e8;
  border-radius: 9px;
  background: #fff;
  box-shadow: 0 10px 20px rgba(0, 0, 0, 0.04);
  display: flex;
  align-items: center;
  padding: 0 17px 2px;
  color: #252d3a;
}

.form .l-last {
  margin-top: 25px;
}

.form .dot {
  display: flex;
  align-items: center;
}

.dot i {
  width: 20px;
  height: 20px;
  margin-right: 12px;
  border: 6px solid #3abf8c;
  border-radius: 50%;
}

.form .l-email {
  margin: 28px 0 0 7px;
}

.field.inset {
  width: 452px;
  margin-left: 6px;
  margin-top: 8px;
  padding-left: 16px;
}

.dashed {
  display: block;
  width: 457px;
  height: 43px;
  margin: 32px 0 0 6px;
  border: 2px dashed #cdd0d5;
  border-radius: 9px;
  box-shadow: 0 10px 20px rgba(0, 0, 0, 0.04);
  font-weight: 500;
  color: #68707f;
}

.form .l-phone {
  margin: 27px 0 0 1px;
}

.phone {
  display: flex;
  gap: 22px;
  margin-top: 14px;
}

.phone .field {
  margin-top: 0;
  width: 290px;
  padding-left: 16px;
}

.phone .select {
  width: 146px;
}

.select svg,
.wide svg {
  margin-left: auto;
  color: #5b626e;
}

.field.wide {
  width: 768px;
  height: 50px;
  margin-top: 5px;
  padding-right: 15px;
}

.col-right label {
  padding-top: 3px;
}

.form .l-type {
  margin-top: 25px;
}

.field.lead {
  height: 51px;
  font-size: 17.3px;
  padding-right: 25px;
  padding-bottom: 0;
}

.lead svg {
  color: #20242b;
}

.dnd {
  margin-top: 32px;
  width: 768px;
  height: 436px;
  border: 1.5px solid #cfd2d7;
  border-radius: 12px;
  overflow: hidden;
}

.dnd-row {
  display: flex;
  align-items: center;
  height: 58.5px;
  padding: 0 26px 0 27px;
}

.dnd-row svg {
  margin-right: 12px;
  color: #6b7280;
}

.box {
  width: 27px;
  height: 27px;
  margin: 9px 0 0 auto;
  border: 1.5px solid #e3e5e9;
  border-radius: 6px;
  background: #fff;
  box-shadow: 0 8px 16px rgba(0, 0, 0, 0.04);
}

.dnd-head,
.dnd-foot {
  font-weight: 500;
}

.dnd-head {
  height: 62px;
  background: #f2f3f6;
  border-bottom: 2px solid #dfe1e5;
}

.dnd-list {
  height: 312px;
  padding-top: 8px;
  border-bottom: 2px solid #e5e7ea;
}

.dnd-row.gbp svg {
  margin-right: 9px;
}

.dnd-row.fb {
  height: 41px;
}

.dnd-row.fb svg {
  margin-right: 10px;
}

.dnd-foot {
  font-size: 18.6px;
}

.info {
  width: 19px;
  height: 19px;
  margin-left: 5px;
  border-radius: 50%;
  background: #2f3848;
  color: #fff;
  font: bold 15px/19px "Liberation Serif", serif;
  text-align: center;
}

.modal-foot {
  display: flex;
  justify-content: flex-end;
  align-items: center;
  gap: 26px;
  height: 104px;
  padding: 0 40px 13px 0;
}

.modal-foot button {
  display: flex;
  align-items: center;
  height: 48px;
  width: 144px;
  border: none;
  border-radius: 9px;
  font-weight: 500;
}

.modal-foot .close {
  height: 50px;
  padding-left: 18px;
  gap: 19px;
  border: 1.5px solid #e4e6ea;
  color: #2f3848;
  box-shadow: 0 8px 20px rgba(0, 0, 0, 0.05);
}

.close svg {
  color: #5f6672;
}

.modal-foot .save {
  padding-left: 22px;
  gap: 22px;
  background: #1f2937;
  color: #fff;
}

/* Click highlight */
.pointer {
  position: absolute;
  left: 1464px;
  top: 428px;
  width: 147px;
  height: 147px;
  border-radius: 50%;
  background: radial-gradient(circle, #000 35.5px, rgba(0, 0, 0, 0.41) 36.5px);
}

.help {
  position: absolute;
  left: 2837px;
  top: 1381px;
  width: 64px;
  height: 64px;
  border-radius: 50%;
  background: #1a82e6;
  box-shadow: 0 2px 10px rgba(0, 0, 0, 0.3);
  text-align: center;
  line-height: 64px;
}

.help span {
  font-size: 42px;
  font-weight: 800;
  background: linear-gradient(#ffd0b8 22%, #f0504c 38%, #e0404c 52%, #5a1f78 62%, #d03a6a 76%);
  -webkit-background-clip: text;
  background-clip: text;
  color: transparent;
}
```
